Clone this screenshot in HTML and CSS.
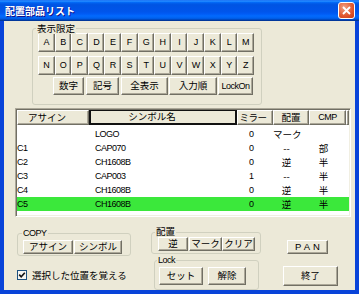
FILE: index.html
```html
<!DOCTYPE html>
<html lang="ja">
<head>
    <meta charset="UTF-8">
    <title>配置部品リスト</title>
    <link rel="stylesheet" href="styles.css">
</head>
<body>
    <div class="window">
        <div class="titlebar">
            <span class="title">配置部品リスト</span>
            <span class="close">
                <svg width="9" height="9" viewBox="0 0 9 9"><path d="M1 1 L8 8 M8 1 L1 8" stroke="#fff" stroke-width="1.8" fill="none"/></svg>
            </span>
        </div>
        <div class="client">
            <div class="group filter">
                <span class="group-label">表示限定</span>
                <div class="letters">
                    <button class="btn">A</button><button class="btn">B</button><button class="btn">C</button><button class="btn">D</button><button class="btn">E</button><button class="btn">F</button><button class="btn">G</button><button class="btn">H</button><button class="btn">I</button><button class="btn">J</button><button class="btn">K</button><button class="btn">L</button><button class="btn">M</button>
                </div>
                <div class="letters row2">
                    <button class="btn">N</button><button class="btn">O</button><button class="btn">P</button><button class="btn">Q</button><button class="btn">R</button><button class="btn">S</button><button class="btn">T</button><button class="btn">U</button><button class="btn">V</button><button class="btn">W</button><button class="btn">X</button><button class="btn">Y</button><button class="btn">Z</button>
                </div>
                <div class="modes">
                    <button class="btn m-num">数字</button>
                    <button class="btn m-sym">記号</button>
                    <button class="btn m-all">全表示</button>
                    <button class="btn m-order">入力順</button>
                    <button class="btn m-lock latin">LockOn</button>
                </div>
            </div>

            <div class="list">
                <div class="list-head">
                    <div class="hcell c-assign">アサイン</div>
                    <div class="hcell c-symbol sorted">シンボル名</div>
                    <div class="hcell c-mirror">ミラー</div>
                    <div class="hcell c-place">配置</div>
                    <div class="hcell c-cmp latin">CMP</div>
                    <div class="hcell c-fill"></div>
                </div>
                <div class="list-body">
                    <div class="row">
                        <span class="c-assign"></span><span class="c-symbol">LOGO</span><span class="c-mirror">0</span><span class="c-place">マーク</span><span class="c-cmp"></span>
                    </div>
                    <div class="row">
                        <span class="c-assign">C1</span><span class="c-symbol">CAP070</span><span class="c-mirror">0</span><span class="c-place">--</span><span class="c-cmp">部</span>
                    </div>
                    <div class="row">
                        <span class="c-assign">C2</span><span class="c-symbol">CH1608B</span><span class="c-mirror">0</span><span class="c-place">逆</span><span class="c-cmp">半</span>
                    </div>
                    <div class="row">
                        <span class="c-assign">C3</span><span class="c-symbol">CAP003</span><span class="c-mirror">1</span><span class="c-place">--</span><span class="c-cmp">半</span>
                    </div>
                    <div class="row">
                        <span class="c-assign">C4</span><span class="c-symbol">CH1608B</span><span class="c-mirror">0</span><span class="c-place">逆</span><span class="c-cmp">半</span>
                    </div>
                    <div class="row selected">
                        <span class="c-assign">C5</span><span class="c-symbol">CH1608B</span><span class="c-mirror">0</span><span class="c-place">逆</span><span class="c-cmp">半</span>
                    </div>
                </div>
            </div>

            <div class="bottom">
                <div class="bottom-left">
                    <div class="group copy">
                        <span class="group-label latin">COPY</span>
                        <button class="btn b-assign">アサイン</button>
                        <button class="btn b-symbol">シンボル</button>
                    </div>
                    <label class="check">
                        <svg width="10" height="10" viewBox="0 0 10 10"><rect x="0.5" y="0.5" width="9" height="9" fill="#f6f6f2" stroke="#1c5180"/><path d="M2.2 4.6 L4.2 6.8 L7.8 2.8" stroke="#111" stroke-width="1.6" fill="none"/></svg>
                        <span>選択した位置を覚える</span>
                    </label>
                </div>
                <div class="bottom-mid">
                    <div class="group place">
                        <span class="group-label">配置</span>
                        <button class="btn b-rev">逆</button>
                        <button class="btn b-mark">マーク</button>
                        <button class="btn b-clear">クリア</button>
                    </div>
                    <div class="group lock">
                        <span class="group-label latin">Lock</span>
                        <button class="btn b-set">セット</button>
                        <button class="btn b-free">解除</button>
                    </div>
                </div>
                <div class="bottom-right">
                    <button class="btn pan latin">PAN</button>
                    <button class="btn quit">終了</button>
                </div>
            </div>
        </div>
    </div>
</body>
</html>
```

FILE: styles.css
```css
* {
    box-sizing: border-box;
}
body {
    margin: 0;
    font-family: "Noto Sans CJK JP", sans-serif;
    font-size: 9.5px;
    color: #000;
}
.latin {
    font-family: "Liberation Sans", sans-serif;
    font-size: 9px;
    letter-spacing: -0.5px;
}
.window {
    width: 359px;
    height: 294px;
    background: #0843d9;
    display: flex;
    flex-direction: column;
}
.titlebar {
    height: 21px;
    display: flex;
    align-items: center;
    background: linear-gradient(to bottom, #0058ee 0%, #3593ff 4%, #288eff 6%, #127dff 8%, #036ffc 10%, #0262ee 14%, #0057e5 20%, #0054e3 24%, #0055eb 56%, #005bf5 66%, #026afe 76%, #0062ef 86%, #0052d6 92%, #0040ab 94%, #003092 100%);
}
.title {
    padding-left: 5px;
    color: #fff;
    font-size: 10px;
    font-weight: bold;
    text-shadow: 1px 1px #0f1089;
}
.close {
    margin-left: auto;
    margin-right: 4px;
    width: 17px;
    height: 17px;
    border: 1px solid #fff;
    border-radius: 3px;
    background: radial-gradient(circle at 35% 30%, #f0a184, #e0562d 60%, #c43b16);
    display: flex;
    align-items: center;
    justify-content: center;
}
.client {
    flex: 1;
    margin: 0 4px 4px;
    background: #ece9d8;
}

/* buttons */
.btn {
    font: inherit;
    margin: 0;
    padding: 0;
    color: #000;
    background: #ece9d8;
    border: 1px solid;
    border-color: #fff #716f64 #716f64 #fff;
    box-shadow: inset -1px -1px #aca899;
    display: flex;
    align-items: center;
    justify-content: center;
    line-height: 1;
    white-space: nowrap;
}
.latin.btn, .letters .btn {
    font-family: "Liberation Sans", sans-serif;
    font-size: 9px;
    letter-spacing: -0.5px;
}

/* group boxes */
.group {
    position: relative;
    border: 1px solid #d0d0bf;
    border-radius: 3px;
}
.group-label {
    position: absolute;
    top: -7px;
    padding: 0 1px;
    line-height: 12px;
    background: #ece9d8;
}
.filter {
    margin: 7px 0 0 28px;
    width: 230px;
    height: 77px;
    padding: 4px 0 0 5px;
}
.filter .group-label {
    left: 3px;
}
.letters {
    display: flex;
    width: 216px;
    height: 19px;
}
.letters .btn {
    flex: 1;
}
.letters.row2 {
    margin-top: 4px;
}
.modes {
    display: flex;
    margin: 2px 0 0 15px;
    height: 18px;
}
.m-num { width: 31px; margin-right: 2px; }
.m-sym { width: 33px; margin-right: 2px; }
.m-all { width: 47px; margin-right: 1px; }
.m-order { width: 48px; margin-right: 1px; }
.m-lock { width: 35px; }

/* list */
.list {
    margin: 3px 0 0 11px;
    width: 336px;
    height: 109px;
    background: #fff;
    border: 1px solid;
    border-color: #aca899 #fff #fff #aca899;
    box-shadow: inset 1px 1px #716f64, inset -1px -1px #f1efe2;
    padding: 1px;
}
.list-head {
    display: flex;
    height: 15px;
    background: #ece9d8;
}
.hcell {
    height: 15px;
    border: 1px solid;
    border-color: #fff #716f64 #716f64 #fff;
    box-shadow: inset -1px -1px #aca899;
    text-align: center;
    line-height: 12px;
    white-space: nowrap;
    overflow: hidden;
}
.hcell.sorted {
    border: 2px solid #111;
    border-top-width: 1px;
    box-shadow: none;
    line-height: 11px;
}
.list-head .c-assign { padding-right: 12px; }
.list-head .c-symbol { padding-right: 22px; }
.list-head .c-mirror { padding-right: 4px; letter-spacing: -0.5px; }
.c-assign { width: 72px; }
.c-symbol { width: 148px; }
.c-mirror { width: 36px; }
.c-place { width: 36px; }
.c-cmp { width: 37px; }
.c-fill { flex: 1; }
.list-body {
    padding-top: 2px;
}
.row {
    display: flex;
    height: 14px;
    line-height: 14px;
}
.row span {
    display: block;
    white-space: nowrap;
}
.row .c-assign, .row .c-symbol, .row .c-mirror {
    font-family: "Liberation Sans", sans-serif;
    font-size: 9px;
    letter-spacing: -0.5px;
}
.row .c-symbol { padding-left: 6px; }
.row .c-mirror { padding-left: 12px; }
.row .c-place { text-align: center; padding-right: 9px; }
.row .c-cmp { text-align: center; padding-right: 8px; }
.row.selected {
    background: #3be83b;
}

/* bottom area */
.bottom {
    display: flex;
}
.bottom-left {
    margin-left: 13px;
    width: 114px;
}
.copy {
    margin-top: 16px;
    height: 23px;
    display: flex;
    padding: 6px 0 0 5px;
}
.copy .group-label { left: 4px; }
.copy .btn { height: 14px; }
.b-assign { width: 50px; margin-right: 1px; }
.b-symbol { width: 48px; }
.check {
    display: flex;
    align-items: center;
    margin-top: 14px;
    height: 10px;
}
.check span {
    margin-left: 5px;
}
.bottom-mid {
    margin-left: 20px;
    width: 110px;
}
.place {
    margin-top: 15px;
    height: 22px;
    display: flex;
    padding: 4px 0 0 6px;
}
.place .group-label { left: 3px; top: -8px; }
.place .btn { height: 14px; }
.b-rev { width: 30px; margin-right: 1px; }
.b-mark { width: 33px; }
.b-clear { width: 33px; }
.lock {
    margin: 6px 0 0 3px;
    width: 105px;
    height: 30px;
    display: flex;
    padding: 6px 0 0 4px;
}
.lock .group-label { left: 2px; }
.lock .btn { height: 18px; }
.b-set { width: 44px; margin-right: 5px; }
.b-free { width: 38px; }
.bottom-right {
    margin-left: 22px;
    width: 55px;
}
.btn.pan {
    margin: 23px 0 0 4px;
    width: 41px;
    height: 14px;
    font-size: 9.5px;
    letter-spacing: 3px;
    padding-left: 3px;
}
.quit {
    margin-top: 12px;
    width: 55px;
    height: 20px;
}
```
